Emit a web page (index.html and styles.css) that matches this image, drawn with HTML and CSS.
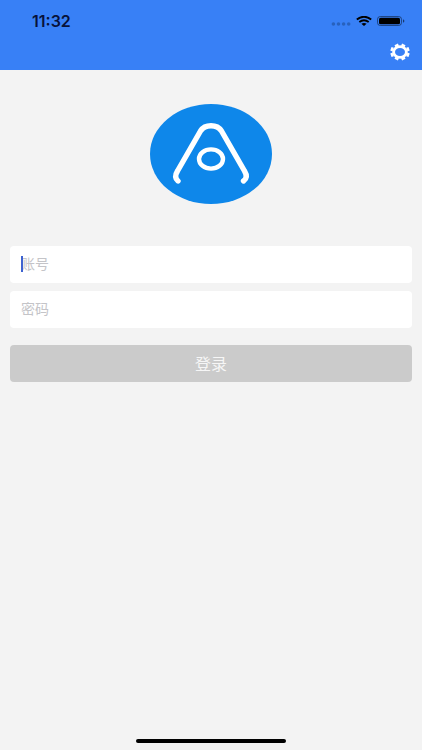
FILE: index.html
```html
<!DOCTYPE html>
<html lang="zh-CN">
<head>
<meta charset="utf-8">
<meta name="viewport" content="width=device-width, initial-scale=1">
<title>登录</title>
<link rel="stylesheet" href="styles.css">
</head>
<body>
<header class="header">
  <div class="status">
    <time class="clock">11:32</time>
    <div class="indicators">
      <svg class="signal" width="20" height="4" viewBox="0 0 20 4" aria-hidden="true">
        <circle cx="2.4" cy="2" r="1.8"/><circle cx="7.5" cy="2" r="1.8"/><circle cx="12.6" cy="2" r="1.8"/><circle cx="17.7" cy="2" r="1.8"/>
      </svg>
      <svg class="wifi" width="16" height="10" viewBox="0 0 16 10" aria-hidden="true">
        <path d="M.8 3.5Q8-2 15.200 3.500M3.300 6Q8 2.600 12.700 6" fill="none" stroke="currentColor" stroke-width="1.9"/>
        <path d="M5.4 7.8Q8 6 10.6 7.8L8 10Z" fill="currentColor"/>
      </svg>
      <svg class="battery" width="28" height="10" viewBox="0 0 28 10" aria-hidden="true">
        <rect x=".5" y=".5" width="24" height="9" rx="2.8" fill="none" stroke="#000" stroke-opacity=".45"/>
        <rect x="2" y="1.7" width="21" height="6.6" rx="1.6"/>
        <path d="M26 3.3Q27.4 3.8 27.4 5T26 6.7Z" fill-opacity=".55"/>
      </svg>
    </div>
  </div>
  <div class="toolbar">
    <button class="settings" type="button" aria-label="设置">
      <svg width="20" height="18" viewBox="-10 -9 20 18" aria-hidden="true">
        <g fill="none" stroke="#fff">
          <ellipse rx="6.4" ry="5.3" stroke-width="2.8"/>
          <path stroke-width="3.8" d="M6.8 2.4L9.1 3.2M2.8 5.5L3.8 7.6M-2.8 5.5L-3.8 7.6M-6.8 2.4L-9.1 3.2M-6.8-2.4L-9.1-3.2M-2.8-5.5L-3.8-7.6M2.8-5.5L3.8-7.6M6.8-2.4L9.1-3.2"/>
        </g>
      </svg>
    </button>
  </div>
</header>
<main class="content">
  <svg class="logo" width="122" height="100" viewBox="0 0 122 100" role="img" aria-label="标志">
    <ellipse cx="61" cy="50" rx="61" ry="50" fill="#0e87ea"/>
    <g fill="none" stroke="#fff" stroke-linecap="round" stroke-linejoin="round">
      <path stroke-width="5.4" d="M28 77C25 74.500 25 71 27.500 67L50.500 27C55 20 67 20 71.500 27L94.500 67C97 71 97 74.500 93.500 77"/>
      <ellipse cx="61" cy="55" rx="12" ry="9.600" stroke-width="4.400"/>
    </g>
  </svg>
  <form class="form">
    <div class="field">
      <input class="input" type="text" placeholder="账号" aria-label="账号">
      <span class="caret"></span>
    </div>
    <div class="field">
      <input class="input" type="password" placeholder="密码" aria-label="密码">
    </div>
    <button class="submit" type="button">登录</button>
  </form>
</main>
<footer class="footer"><div class="home-bar"></div></footer>
</body>
</html>
```
FILE: styles.css
```css
* {
  box-sizing: border-box;
}

body {
  margin: 0;
  min-height: 100vh;
  display: flex;
  flex-direction: column;
  background: #f3f3f3;
  font-family: "Liberation Sans", "Noto Sans CJK SC", sans-serif;
}

.header {
  background: #3880f6;
  color: #000;
}

.status {
  display: flex;
  align-items: center;
  justify-content: space-between;
  height: 34px;
  padding: 8px 17px 0 32px;
}

.clock {
  font: 600 16px/20px Inter, sans-serif;
  color: #07123a;
}

.indicators {
  display: flex;
  align-items: center;
  gap: 5px;
}

.signal {
  align-self: flex-end;
  fill: #2861bd;
}

.toolbar {
  display: flex;
  justify-content: flex-end;
  align-items: center;
  height: 36px;
  padding: 0 12px;
}

.settings {
  display: flex;
  padding: 0;
  border: 0;
  background: none;
}

.content {
  flex: 1;
  display: flex;
  flex-direction: column;
  align-items: center;
  gap: 42px;
  padding: 34px 10px 0;
}

.form {
  align-self: stretch;
  display: flex;
  flex-direction: column;
  gap: 8px;
}

.field {
  position: relative;
  display: flex;
}

.input {
  flex: 1;
  min-width: 0;
  height: 37px;
  padding: 0 11px 3px;
  border: 0;
  border-radius: 4px;
  background: #fff;
  font: 400 14px/20px "Noto Sans CJK SC", sans-serif;
}

.input::placeholder {
  color: #c4c4c8;
  opacity: 1;
}

.caret {
  position: absolute;
  left: 11px;
  top: 10px;
  width: 2px;
  height: 16px;
  background: #3d62d0;
}

.submit {
  height: 37px;
  margin-top: 9px;
  padding: 0 0 2px;
  border: 0;
  border-radius: 4px;
  background: #cbcbcb;
  color: #f6f6f6;
  font: 400 16px/24px "Noto Sans CJK SC", sans-serif;
}

.footer {
  display: flex;
  justify-content: center;
  padding-bottom: 7px;
}

.home-bar {
  width: 150px;
  height: 4px;
  border-radius: 2px;
  background: #000;
}
```
